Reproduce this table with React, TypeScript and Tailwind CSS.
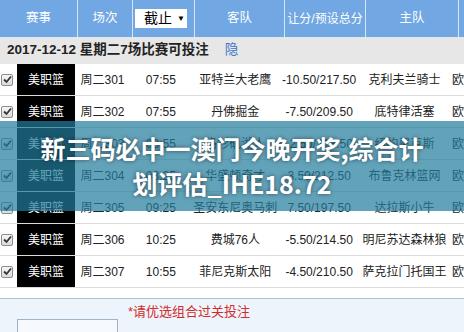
const rows = [
  { no: '周二301', time: '07:55', away: '亚特兰大老鹰', line: '-10.50/217.50', home: '克利夫兰骑士' },
  { no: '周二302', time: '07:55', away: '丹佛掘金', line: '-7.50/209.50', home: '底特律活塞' },
  { no: '周二303', time: '08:55', away: '洛杉矶湖人', line: '-2.50/213.50', home: '纽约尼克斯' },
  { no: '周二304', time: '08:25', away: '华盛顿奇才', line: '3.50/212.50', home: '布鲁克林篮网' },
  { no: '周二305', time: '09:25', away: '圣安东尼奥马刺', line: '7.50/197.50', home: '达拉斯小牛' },
  { no: '周二306', time: '10:25', away: '费城76人', line: '-5.50/214.50', home: '明尼苏达森林狼' },
  { no: '周二307', time: '10:55', away: '菲尼克斯太阳', line: '-4.50/210.50', home: '萨克拉门托国王' },
];

function Check() {
  return (
    <span className="ml-[1px] flex h-[12px] w-[12px] items-center justify-center rounded-[2px] border border-[#8c8c8c] bg-gradient-to-b from-[#f7f7f7] to-[#dcdcdc]">
      <svg width="9" height="9" viewBox="0 0 9 9">
        <path d="M1 4.5 L3.5 7 L8 1.5" fill="none" stroke="#333" strokeWidth="1.8" />
      </svg>
    </span>
  );
}

export default function App() {
  return (
    <div
      className="relative flex h-[332px] w-[464px] flex-col overflow-hidden bg-white text-[12px] text-[#222]"
      style={{ fontFamily: '"Liberation Sans", "Noto Sans CJK SC", sans-serif' }}
    >
      {/* header */}
      <div className="flex h-[37px] shrink-0 whitespace-nowrap bg-[#71a7e3] text-[12.5px] text-white">
        <div className="flex w-[78px] items-center justify-center border-r border-[#d6e6f8]">赛事</div>
        <div className="flex w-[55px] items-center justify-center border-r border-[#d6e6f8]">场次</div>
        <div className="flex w-[62px] items-center border-r border-[#d6e6f8] pl-[2px]">
          <div className="flex h-[19px] w-[52px] items-center gap-[5px] bg-white pl-[9px] text-[14px] text-black">
            截止<span className="text-[8px]">▼</span>
          </div>
        </div>
        <div className="flex w-[90px] items-center justify-center border-r border-[#d6e6f8]">客队</div>
        <div className="flex w-[81px] items-center justify-center border-r border-[#d6e6f8] text-[12px]">让分/预设总分</div>
        <div className="flex w-[93px] items-center justify-center border-r border-[#d6e6f8]">主队</div>
        <div className="flex-1" />
      </div>

      {/* date row */}
      <div className="flex h-[27px] shrink-0 items-center bg-[#e7e7e7] pl-[7px] text-[13.5px]">
        <span className="font-bold text-[#222]">2017-12-12 星期二7场比赛可投注</span>
        <span className="ml-[16px] text-[#3a78c6]">隐</span>
      </div>

      {/* match rows */}
      {rows.map((r) => (
        <div key={r.no} className="flex h-[32px] shrink-0 border-b border-[#dcdcdc]">
          <div className="flex w-[17px] items-center">
            <Check />
          </div>
          <div className="flex w-[60px] items-center justify-center bg-black text-white">美职篮</div>
          <div className="flex w-[56px] items-center pl-[5px]">{r.no}</div>
          <div className="flex w-[62px] items-center justify-center">{r.time}</div>
          <div className="flex w-[90px] items-center justify-center whitespace-nowrap">{r.away}</div>
          <div className="flex w-[81px] items-center justify-center whitespace-nowrap">{r.line}</div>
          <div className="flex w-[93px] items-center justify-center whitespace-nowrap">{r.home}</div>
          <div className="flex flex-1 items-center pl-[2px] whitespace-nowrap">欧</div>
        </div>
      ))}

      {/* footer */}
      <div className="mt-[10px] flex-1 border-t border-[#a9c3da] bg-[#edf4fb]">
        <div className="h-[20px] pl-[128px] pt-[3px] text-[13px] text-[#d12c2c]">*请优选组合过关投注</div>
        <div className="ml-[17px] h-[20px] w-[101px] border border-[#9fb4c8] bg-[#f6faff]" />
      </div>

      {/* title band over the table */}
      <div
        className="absolute left-0 top-[121px] flex h-[90px] w-full flex-col items-center justify-center bg-[rgba(35,125,158,0.71)] text-[25px] font-bold leading-[35px] text-white [text-shadow:0_0_4px_rgba(0,0,0,0.55)]"
        style={{ fontFamily: '"Noto Sans CJK SC", sans-serif' }}
      >
        <span>新三码必中一澳门今晚开奖,综合计</span>
        <span>划评估_IHE18.72</span>
      </div>
    </div>
  );
}
